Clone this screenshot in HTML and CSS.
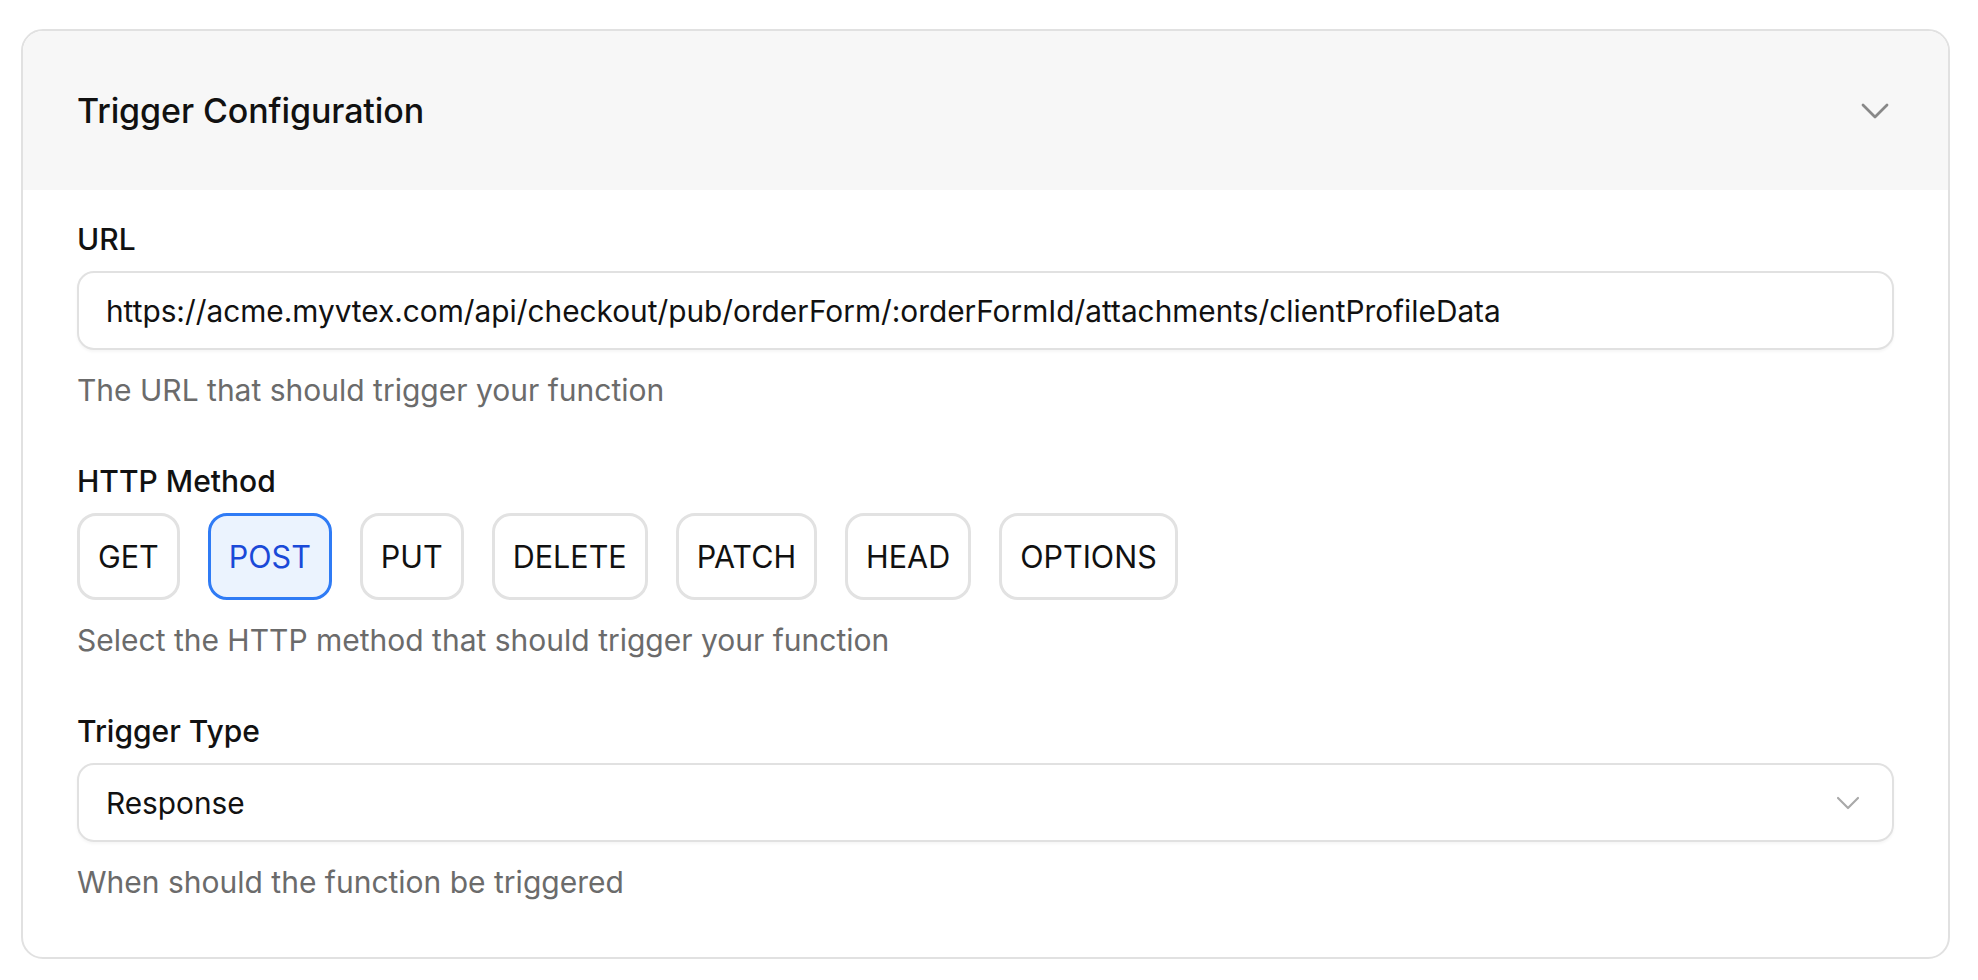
FILE: index.html
```html
<!DOCTYPE html>
<html lang="en">
<head>
<meta charset="utf-8">
<title>Trigger Configuration</title>
<link rel="stylesheet" href="styles.css">
</head>
<body>
<section class="card">
  <header class="card-header">
    <h2 class="card-title">Trigger Configuration</h2>
    <svg class="header-chevron" viewBox="0 0 24 24" width="48" height="48" aria-hidden="true">
      <path d="M6 9l6 6 6-6" fill="none" stroke="currentColor" stroke-width="1.4" stroke-linecap="round" stroke-linejoin="round"/>
    </svg>
  </header>
  <div class="card-body">
    <div class="field">
      <label class="field-label" for="url">URL</label>
      <input class="text-input" id="url" type="text" value="https://acme.myvtex.com/api/checkout/pub/orderForm/:orderFormId/attachments/clientProfileData">
      <p class="field-help">The URL that should trigger your function</p>
    </div>
    <div class="field">
      <span class="field-label">HTTP Method</span>
      <div class="method-row">
        <button class="method">GET</button>
        <button class="method method-active">POST</button>
        <button class="method">PUT</button>
        <button class="method">DELETE</button>
        <button class="method">PATCH</button>
        <button class="method">HEAD</button>
        <button class="method">OPTIONS</button>
      </div>
      <p class="field-help">Select the HTTP method that should trigger your function</p>
    </div>
    <div class="field">
      <span class="field-label">Trigger Type</span>
      <div class="select">
        <span class="select-value">Response</span>
        <svg class="select-chevron" viewBox="0 0 24 24" width="40" height="40" aria-hidden="true">
          <path d="M6 9l6 6 6-6" fill="none" stroke="currentColor" stroke-width="1.3" stroke-linecap="round" stroke-linejoin="round"/>
        </svg>
      </div>
      <p class="field-help">When should the function be triggered</p>
    </div>
  </div>
</section>
</body>
</html>
```
FILE: styles.css
```css
* { box-sizing: border-box; }

html, body {
  margin: 0;
  background: #ffffff;
}

body {
  padding: 29px 28px 16px 21px;
  font-family: Inter, "Noto Sans", "Liberation Sans", sans-serif;
  color: #111111;
}

.card {
  border: 2px solid #e1e1e1;
  border-radius: 22px;
  overflow: hidden;
  background: #ffffff;
}

.card-header {
  height: 159px;
  background: #f7f7f7;
  display: flex;
  align-items: center;
  justify-content: space-between;
  padding: 0 49px 0 54px;
}

.card-title {
  margin: 0;
  font-size: 34px;
  font-weight: 500;
  color: #111111;
  letter-spacing: -0.1px;
}

.header-chevron {
  color: #888888;
  display: block;
}

.card-body {
  display: flex;
  flex-direction: column;
  gap: 55px;
  padding: 31px 54px 57px 54px;
}

.field {
  display: flex;
  flex-direction: column;
}

.field-label {
  font-size: 30px;
  line-height: 36px;
  font-weight: 500;
  color: #111111;
  margin-bottom: 14px;
}

.text-input {
  width: 100%;
  height: 79px;
  border: 2px solid #e1e1e1;
  border-radius: 17px;
  padding: 0 27px;
  font-family: inherit;
  font-size: 29.8px;
  color: #111111;
  background: #ffffff;
  box-shadow: 0 2px 3px rgba(0, 0, 0, 0.04);
  outline: none;
}

.field-help {
  margin: 22px 0 0 0;
  font-size: 30px;
  line-height: 36px;
  color: #6b6b6b;
}

.method-row {
  display: flex;
  gap: 28px;
}

.method {
  height: 87px;
  padding: 0 18px;
  border: 3px solid #e2e2e2;
  border-radius: 19px;
  background: #ffffff;
  font-family: inherit;
  font-size: 30.5px;
  font-weight: 400;
  color: #111111;
}

.method-active {
  border-color: #2f7bf5;
  background: #ebf3fe;
  color: #1a49d8;
}

.select {
  height: 79px;
  border: 2px solid #e1e1e1;
  border-radius: 17px;
  padding: 0 24px 0 27px;
  display: flex;
  align-items: center;
  justify-content: space-between;
  box-shadow: 0 2px 3px rgba(0, 0, 0, 0.04);
}

.select-value {
  font-size: 29.8px;
  color: #111111;
}

.select-chevron {
  color: #a9a9a9;
  display: block;
}
```
